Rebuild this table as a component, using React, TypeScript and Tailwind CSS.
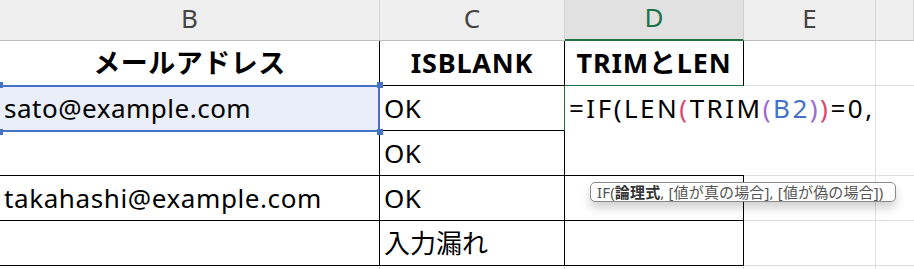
import React from 'react';

const font = { fontFamily: '"Noto Sans", "Noto Sans CJK JP", sans-serif' };

const cols = ['B', 'C', 'D', 'E', ''];

// one colored run of the formula being typed in D2
const Tok = ({ c, children }: { c?: string; children: React.ReactNode }) => (
  <span className={c}>{children}</span>
);

export default function App() {
  return (
    <div className="w-[914px] h-[269px] overflow-hidden bg-white text-black relative" style={font}>
      <div className="grid grid-cols-[380px_185px_179px_132px_1fr] grid-rows-[41px_45px_45px_45px_45px_45px_1fr] h-full">
        {/* column headers */}
        {cols.map((c) =>
          c === 'D' ? (
            <div key={c} className="bg-[#e1e1e1] border-r border-[#cfcfcf] border-b-2 border-b-[#217346] flex items-center justify-center pb-1 text-[26px] text-[#217346]">
              {c}
            </div>
          ) : (
            <div key={c || 'f'} className="bg-[#efefef] border-r border-[#d4d4d4] border-b border-b-[#bdbdbd] flex items-center justify-center pb-1 text-[26px] text-[#444]">
              {c}
            </div>
          )
        )}

        {/* row 1: titles */}
        <div className="border-r border-b border-black flex items-center justify-center text-[27px] tracking-[0.5px] font-bold">メールアドレス</div>
        <div className="border-r border-b border-black flex items-center justify-center text-[27px] tracking-[0.8px] font-bold">ISBLANK</div>
        <div className="border-r border-black border-b border-b-[#217346] flex items-center justify-center text-[27px] tracking-[0.8px] font-bold">TRIMとLEN</div>
        <div className="border-r border-b border-[#dedede]" />
        <div className="border-b border-[#dedede]" />

        {/* row 2: B2 is the referenced range, D2 is being edited */}
        <div className="relative bg-[#e9eef8] flex items-center pl-1 text-[26px] tracking-[0.5px]">
          sato@example.com
          <div className="absolute -left-1 -top-px right-0 -bottom-px border-2 border-[#4472c4]" />
          <span className="absolute -right-[3px] -top-[4px] w-[6px] h-[6px] bg-[#4472c4]" />
          <span className="absolute -right-[3px] -bottom-[4px] w-[6px] h-[6px] bg-[#4472c4]" />
          <span className="absolute -left-[3px] -top-[4px] w-[6px] h-[6px] bg-[#4472c4]" />
          <span className="absolute -left-[3px] -bottom-[4px] w-[6px] h-[6px] bg-[#4472c4]" />
        </div>
        <div className="border-r border-r-[#217346] border-b border-black flex items-center pl-1 text-[26px] tracking-[0.5px]">OK</div>
        <div className="relative z-10 flex items-center pl-1 text-[26px] tracking-[2.5px] whitespace-nowrap overflow-visible">
          <span className="flex">
            <Tok>=IF(LEN</Tok>
            <Tok c="text-[#d9486e]">(</Tok>
            <Tok>TRIM</Tok>
            <Tok c="text-[#9b6bd6]">(</Tok>
            <Tok c="text-[#4472c4]">B2</Tok>
            <Tok c="text-[#9b6bd6]">)</Tok>
            <Tok c="text-[#d9486e]">)</Tok>
            <Tok>=0,</Tok>
          </span>
        </div>
        <div className="border-r border-[#dedede]" />
        <div />

        {/* row 3 */}
        <div className="border-r border-b border-black" />
        <div className="border-r border-b border-black flex items-center pl-1 text-[26px] tracking-[0.5px]">OK</div>
        <div className="border-b border-black" />
        <div className="border-r border-b border-[#dedede]" />
        <div className="border-b border-[#dedede]" />

        {/* row 4 */}
        <div className="border-r border-b border-black flex items-center pl-1 text-[26px] tracking-[0.6px]">takahashi@example.com</div>
        <div className="border-r border-b border-black flex items-center pl-1 text-[26px] tracking-[0.5px]">OK</div>
        <div className="border-r border-b border-black" />
        <div className="border-r border-b border-[#dedede]" />
        <div className="border-b border-[#dedede]" />

        {/* row 5 */}
        <div className="border-r border-b border-black" />
        <div className="border-r border-b border-black flex items-center pl-1 text-[26px]">入力漏れ</div>
        <div className="border-r border-b border-black" />
        <div className="border-r border-b border-[#dedede]" />
        <div className="border-b border-[#dedede]" />

        {/* row 6 */}
        <div className="border-r border-[#dedede]" />
        <div className="border-r border-[#dedede]" />
        <div className="border-r border-[#dedede]" />
        <div className="border-r border-[#dedede]" />
        <div />
      </div>

      {/* function argument tip */}
      <div className="absolute left-[590px] top-[182px] w-[306px] h-[20px] z-20 bg-white border border-[#8a8a8a] rounded-[5px] shadow-[0_6px_10px_rgba(0,0,0,0.18)] flex items-center pl-[6px] text-[15px] tracking-[0.15px] leading-none text-[#555] whitespace-nowrap">
        IF(<b className="text-[#333]">論理式</b>, [値が真の場合], [値が偽の場合])
      </div>
    </div>
  );
}
